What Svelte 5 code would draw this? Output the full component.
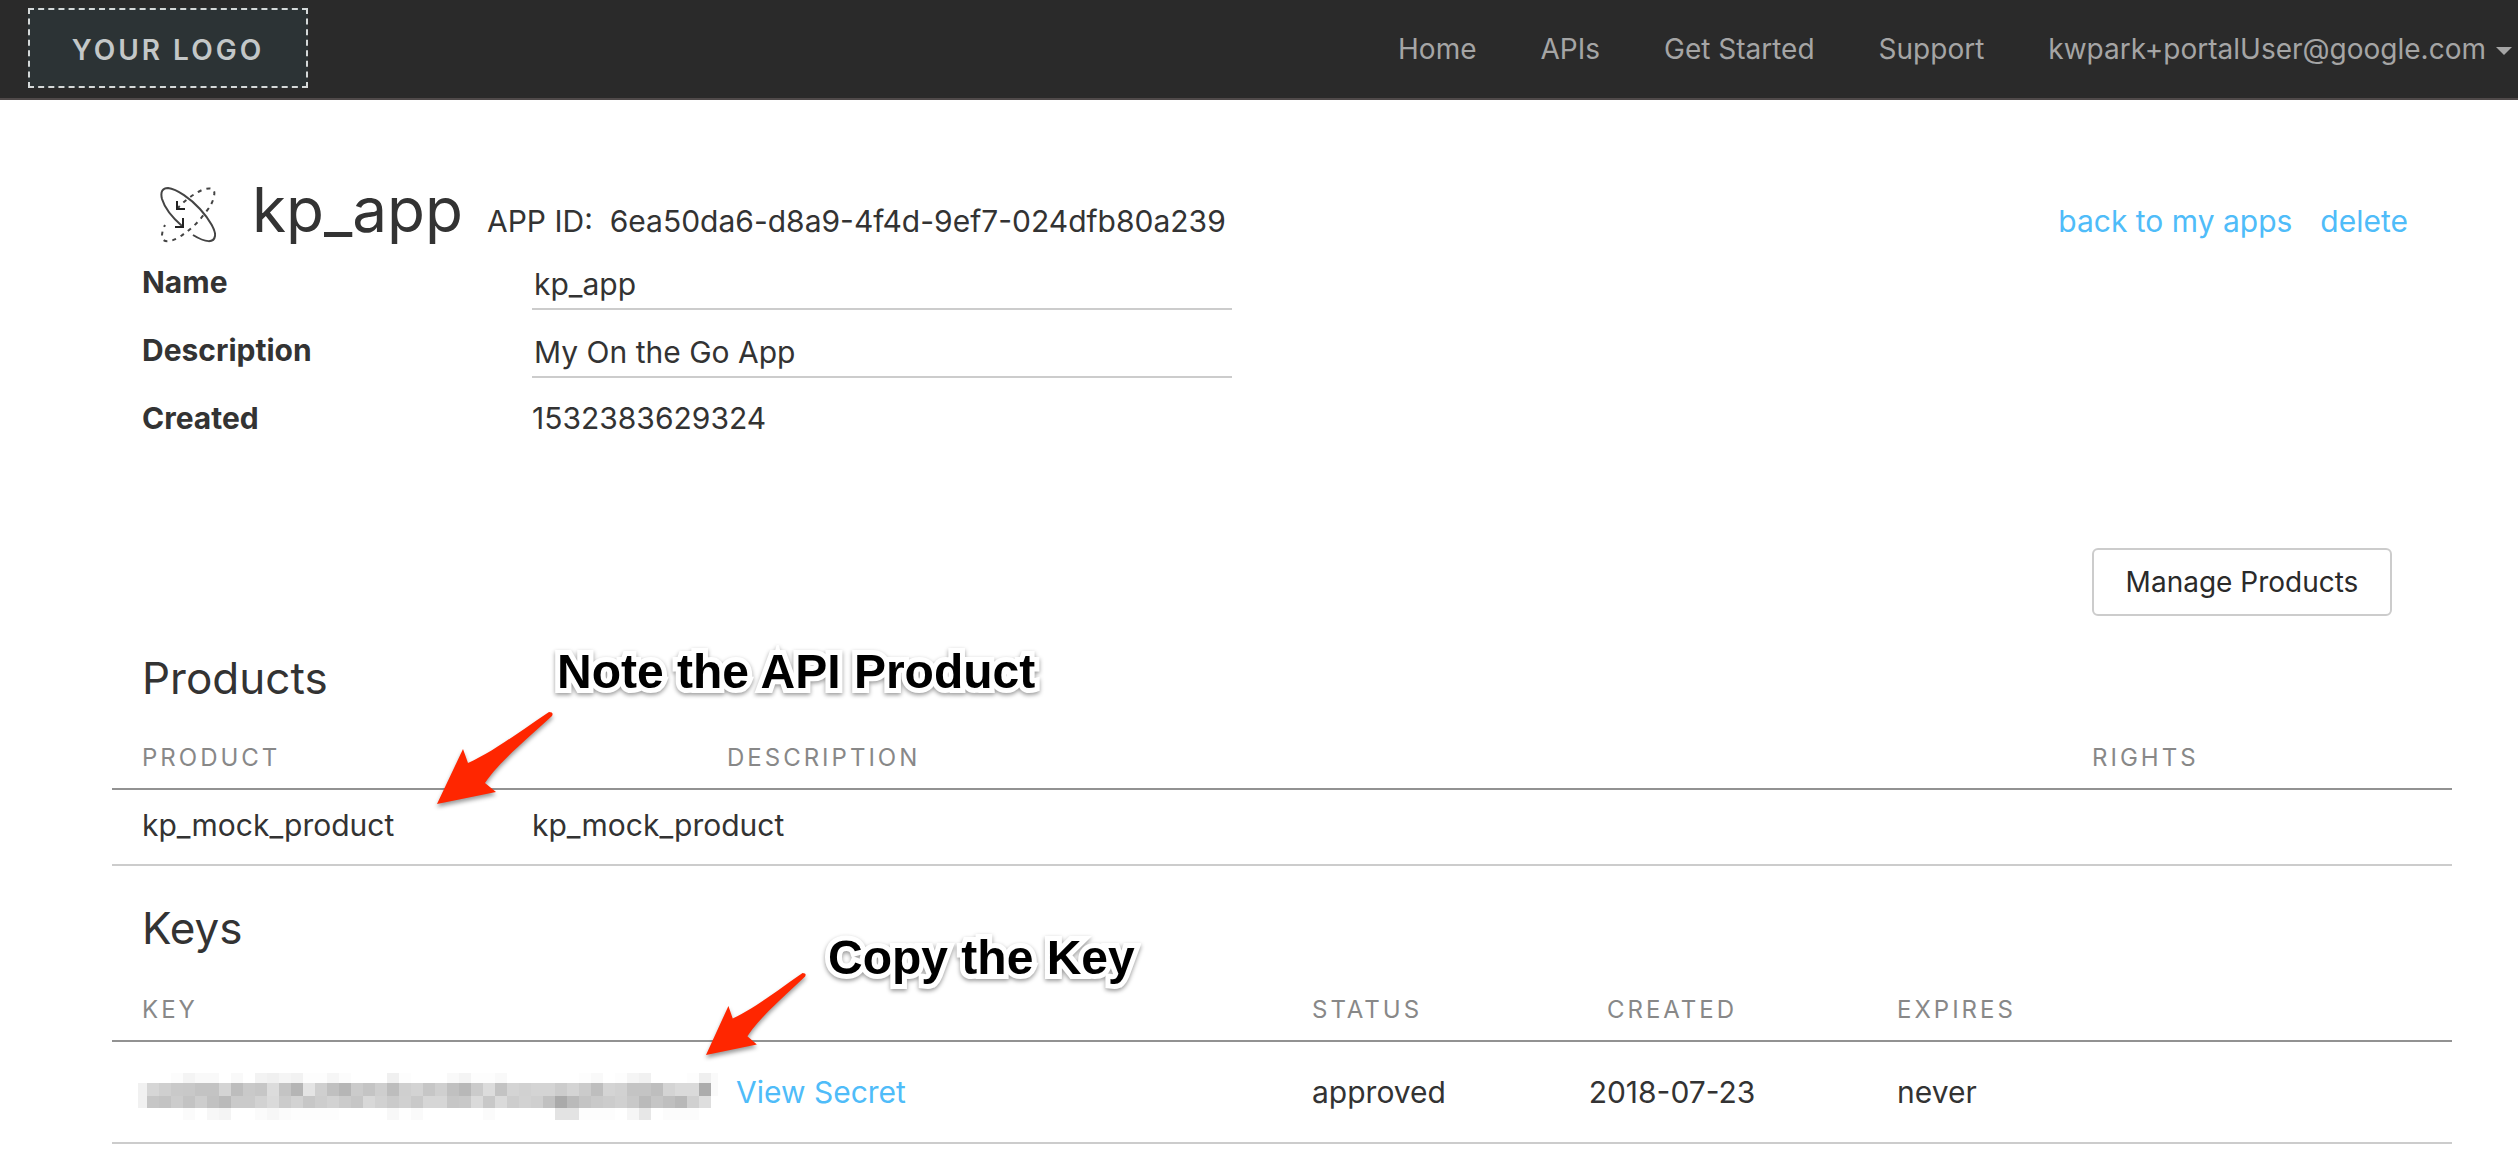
<script>
  const nav = ['Home', 'APIs', 'Get Started', 'Support'];
  let name = $state('kp_app');
  let description = $state('My On the Go App');

  // Grey levels of the masked key: one hex pair for each 12px cell
  const mask = [
    { y: 0, h: 10, v: 'fffffcf4f9f9fff9fff3f0f5f2fdfdf6fcfffffff0fdfffffff9f4fdfdf9fffffffffffffdf9fffdf5f1fffffffdef' },
    { y: 10, h: 13, v: 'd6cfc9c8c3c3d4bdc9c6dcc4b5e4cfc0b6cbc4cebdcfd3c6cfc0b8cbdcc3d4d1d4d4ccd4cbbed4d1c4c4bed4dadaac' },
    { y: 23, h: 12, v: 'c6c3ccc3cdc1bacacad2dacbd2c7cdd2cbc6d8d1cad0c9d6d6c6c8dac8dacdd2cfc1aabac4c9ccd0c8bac5bfb8d0de' },
    { y: 35, h: 12, v: 'fffffffbfff7f4fffffbf7fbfdfdfdfdfffffffff8fefafffffffffffbffffffffffe3e3fdfdfdfff6e7fffcfcfcff' }
  ].map((row) => ({ ...row, cells: row.v.match(/../g) }));
</script>

<header class="bar">
  <a class="logo" href="#home">YOUR LOGO</a>
  <nav>
    {#each nav as item}<a href="#nav">{item}</a>{/each}
    <button class="user" type="button">kwpark+portalUser@google.com<span class="caret"></span></button>
  </nav>
</header>

<main>
  <div class="title">
    <svg class="icon" viewBox="0 0 56 56" aria-hidden="true">
      <g fill="none" stroke="#444" stroke-width="2">
        <path d="M22 39C14 32 5 22 2 12C0 4 3 1 8 1C17 2 31 12 40 22C50 33 56 44 55 49C54 56 46 56 33 48" />
        <path d="M17 22C24 14 32 8 42 3C50 0 56 1 54 9C53 15 50 20 45 26C38 36 30 43 18 51C8 56 2 55 2 49Q2 44 5 38" stroke-dasharray="4 5" />
        <path d="M15 40H23V31M17 14V22H25" stroke="#222" />
      </g>
    </svg>
    <h1>kp_app</h1>
    <p>APP ID:&nbsp; 6ea50da6-d8a9-4f4d-9ef7-024dfb80a239</p>
    <div class="links"><a href="#apps">back to my apps</a><a href="#delete">delete</a></div>
  </div>

  <form class="fields">
    <label for="name">Name</label><input id="name" bind:value={name} />
    <label for="desc">Description</label><input id="desc" bind:value={description} />
    <label for="created">Created</label><output id="created">1532383629324</output>
  </form>

  <div class="actions"><button class="manage" type="button">Manage Products</button></div>

  <section>
    <h2>Products</h2>
    <div class="note products-note">
      <svg class="arrow" width="116" height="93" viewBox="0 0 116 93" aria-hidden="true">
        <path d="M0 92L26 37L31 51C56 40 82 20 112 0Q117 0 115 4C90 27 62 50 48 71L59 80Z" />
      </svg>
      <span>Note the API Product</span>
    </div>
    <table class="products">
      <thead><tr><th colspan="3">Product</th><th colspan="7">Description</th><th colspan="2">Rights</th></tr></thead>
      <tbody><tr><td colspan="2">kp_mock_product</td><td colspan="8">kp_mock_product</td><td colspan="2"></td></tr></tbody>
    </table>
  </section>

  <section>
    <h2>Keys</h2>
    <div class="note keys-note">
      <svg class="arrow" width="100" height="83" viewBox="0 0 116 93" preserveAspectRatio="none" aria-hidden="true">
        <path d="M0 92L26 37L31 51C56 40 82 20 112 0Q117 0 115 4C90 27 62 50 48 71L59 80Z" />
      </svg>
      <span>Copy the Key</span>
    </div>
    <table class="keys">
      <thead><tr><th colspan="6">Key</th><th>Status</th><th class="center" colspan="2">Created</th><th colspan="3">Expires</th></tr></thead>
      <tbody>
        <tr>
          <td colspan="6">
            <div class="key">
              <svg width="580" height="47" viewBox="-9 0 580 47" shape-rendering="crispEdges" role="img" aria-label="Hidden key">
                <rect x="-9" y="10" width="9" height="25" fill="#f1f1f1" />
                {#each mask as row}{#each row.cells as c, i}<rect x={i * 12} y={row.y} width="12" height={row.h} fill={'#' + c + c + c} />{/each}{/each}
                <rect x="564" y="0" width="7" height="23" fill="#fafafa" />
              </svg>
              <a href="#secret">View Secret</a>
            </div>
          </td>
          <td>approved</td><td class="center" colspan="2">2018-07-23</td><td colspan="3">never</td>
        </tr>
      </tbody>
    </table>
  </section>
</main>

<style>
  :global(body) { margin: 0; background: #fff; color: #333; font: 30px/40px Inter, "Open Sans", sans-serif; }
  a { color: #4fbcf9; text-decoration: none; }
  h1, h2, p { margin: 0; font-weight: 400; }
  button, input { font: inherit; color: inherit; background: none; }
  .bar { display: flex; justify-content: space-between; align-items: center; box-sizing: border-box; height: 100px; padding: 0 6px 2px 28px; background: #2a2a2a; border-bottom: 2px solid #504a4a; }
  .logo { box-sizing: border-box; width: 280px; height: 80px; border: 2px dashed #d5d9d9; background: #2c3335; color: #c3c7c8; font-size: 28px; font-weight: 600; line-height: 80px; letter-spacing: 3px; text-align: center; }
  nav { display: flex; align-items: center; gap: 64px; padding-top: 2px; }
  nav a, .user { color: #a5a5a5; font-size: 28px; }
  .user { display: flex; align-items: center; gap: 10px; padding: 0; border: 0; cursor: pointer; }
  .caret { margin-top: 4px; border: 8px solid transparent; border-top-color: currentColor; border-bottom: 0; }
  main { padding: 76px 66px 24px 112px; }
  .title { display: flex; align-items: baseline; padding: 0 44px 0 48px; }
  .icon { width: 56px; height: 56px; align-self: center; margin: 10px 36px 0 0; }
  h1 { margin-right: 24px; font-size: 62px; line-height: 68px; }
  .links { display: flex; gap: 28px; margin-left: auto; }
  .fields { display: grid; grid-template-columns: 390px 700px; row-gap: 20px; padding: 18px 30px 0; }
  label { font-weight: 700; }
  input { box-sizing: border-box; height: 48px; padding: 0 2px 2px; border: 0; border-bottom: 2px solid #ccc; outline: none; }
  .actions { display: flex; justify-content: flex-end; padding: 110px 60px 0 0; }
  .manage { width: 300px; height: 68px; padding: 0; border: 2px solid #ccc; border-radius: 6px; font-size: 28px; color: #2a2a2a; cursor: pointer; }
  section { position: relative; padding-top: 34px; }
  h2 { padding-left: 30px; font-size: 44px; line-height: 56px; }
  table { width: 100%; table-layout: fixed; border-spacing: 0; }
  th, td { padding: 0 0 0 30px; text-align: left; font-weight: 400; }
  th { padding-top: 32px; padding-bottom: 10px; border-bottom: 2px solid #929292; color: #888; font-size: 24px; letter-spacing: 3px; text-transform: uppercase; }
  td { box-sizing: border-box; height: 76px; padding-bottom: 4px; border-bottom: 2px solid #ccc; }
  .keys th { padding-top: 34px; }
  .keys td { height: 102px; padding-bottom: 0; }
  .keys .center { padding-left: 0; text-align: center; }
  .key { display: flex; align-items: center; gap: 18px; margin-left: -4px; }
  .key svg { margin-top: 8px; }
  .note { position: absolute; z-index: 1; }
  .note span { position: absolute; white-space: nowrap; color: #000; font: 700 48px/56px "Liberation Sans", Arial, sans-serif; -webkit-text-stroke: 10px #fff; paint-order: stroke fill; filter: drop-shadow(0 2px 2px #0006); }
  .arrow { display: block; overflow: visible; fill: #ff2600; filter: drop-shadow(0 3px 2px #0006); }
  .products-note { left: 325px; top: 96px; }
  .products-note span { left: 120px; top: -68px; }
  .keys-note { left: 594px; top: 107px; }
  .keys-note span { left: 122px; top: -43px; }
</style>
